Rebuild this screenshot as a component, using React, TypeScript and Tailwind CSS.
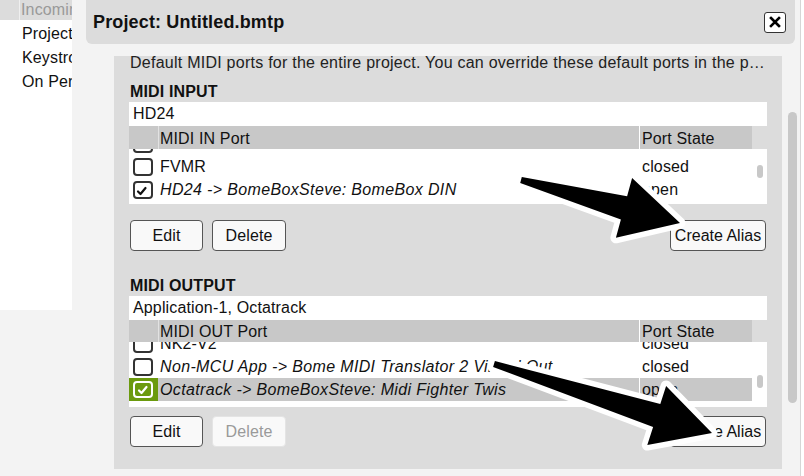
import React from 'react';

type Row = {
  name: string;
  state: string;
  checked?: boolean;
  italic?: boolean;
  selected?: boolean;
};

const inputRows: Row[] = [
  { name: 'BomeBox', state: 'closed' },
  { name: 'FVMR', state: 'closed' },
  { name: 'HD24 -> BomeBoxSteve: BomeBox DIN', state: 'open', checked: true, italic: true },
  { name: 'Launchpad', state: 'closed' },
];

const outputRows: Row[] = [
  { name: 'NK2-V2', state: 'closed' },
  { name: 'Non-MCU App -> Bome MIDI Translator 2 Virtual Out', state: 'closed', italic: true },
  {
    name: 'Octatrack -> BomeBoxSteve: Midi Fighter Twis',
    state: 'open',
    checked: true,
    italic: true,
    selected: true,
  },
];

const Tick = ({ color }: { color: string }) => (
  <svg width="12" height="10" viewBox="0 0 12 10">
    <path d="M2 5.5 L4.5 8 L9.5 2" fill="none" stroke={color} strokeWidth="2.2" strokeLinecap="round" strokeLinejoin="round" />
  </svg>
);

const CheckBox = ({ checked, onGreen }: { checked?: boolean; onGreen?: boolean }) => {
  if (onGreen) {
    return (
      <div className="flex h-[17px] w-[20px] items-end justify-center rounded-[4px] border-2 border-white pb-[1px]">
        <Tick color="#ffffff" />
      </div>
    );
  }
  return (
    <div className="flex h-[18px] w-[20px] items-end justify-start rounded-[4px] border-2 border-[#333] bg-white pb-[1px] pl-[1px]">
      {checked && <Tick color="#111111" />}
    </div>
  );
};

const TableRow = ({ row }: { row: Row }) => (
  <div className="flex h-[23px] shrink-0">
    <div className={`flex w-[29px] items-center pl-[4px] ${row.selected ? 'bg-[#6b9a0e]' : ''}`}>
      <CheckBox checked={row.checked} onGreen={row.selected} />
    </div>
    <div
      className={`w-[481px] overflow-hidden whitespace-nowrap pl-[2px] leading-[23px] ${
        row.italic ? 'italic tracking-[0.35px]' : ''
      } ${row.selected ? 'bg-[#c8c8c8]' : ''}`}
    >
      {row.name}
    </div>
    <div className={`w-[113px] border-l border-white pl-[2px] leading-[23px] ${row.selected ? 'bg-[#c8c8c8]' : ''}`}>
      {row.state}
    </div>
  </div>
);

const PortTable = ({
  title,
  value,
  column,
  rows,
  bodyHeight,
  headerHeight,
  headerPad,
  offset,
  thumbTop,
}: {
  title: string;
  value: string;
  column: string;
  rows: Row[];
  bodyHeight: string;
  headerHeight: string;
  headerPad: string;
  offset: string;
  thumbTop: string;
}) => (
  <>
    <div className="h-[20px] pl-[1px] text-[16px] font-bold leading-[20px]">{title}</div>
    <div className="h-[24px] bg-white pl-[4px] leading-[24px]">{value}</div>
    <div className={`flex bg-[#c8c8c8] ${headerHeight}`}>
      <div className="w-[29px]" />
      <div className={`w-[481px] border-l border-[#e2e2e2] pl-[1px] leading-[20px] ${headerPad}`}>{column}</div>
      <div className={`w-[113px] border-l border-white pl-[2px] leading-[20px] ${headerPad}`}>Port State</div>
      <div className="w-[15px] bg-[#dcdcdc]" />
    </div>
    <div className={`flex overflow-hidden bg-white ${bodyHeight}`}>
      <div className="flex w-[623px] flex-col overflow-hidden">
        <div className={`flex flex-col ${offset}`}>
          {rows.map((r) => (
            <TableRow key={r.name} row={r} />
          ))}
        </div>
      </div>
      <div className="w-[15px] pl-[5px]">
        <div className={`h-[13px] w-[6px] rounded-full bg-[#c8c8c8] ${thumbTop}`} />
      </div>
    </div>
  </>
);

const Buttons = ({ deleteDisabled }: { deleteDisabled?: boolean }) => (
  <div className="flex h-[31px] pl-[1px] pr-[1px]">
    <button className="h-[31px] w-[73px] rounded-[4px] border border-[#555] bg-[#f9f9f9]">Edit</button>
    <button
      className={`ml-[9px] h-[31px] w-[74px] rounded-[4px] border bg-[#f9f9f9] ${
        deleteDisabled ? 'border-[#e4e4e4] text-[#9a9a9a]' : 'border-[#555]'
      }`}
    >
      Delete
    </button>
    <button className="ml-auto h-[31px] w-[96px] rounded-[4px] border border-[#555] bg-[#f9f9f9] tracking-normal">
      Create Alias
    </button>
  </div>
);

function arrowPoints(tx: number, ty: number, hx: number, hy: number) {
  const dx = hx - tx;
  const dy = hy - ty;
  const len = Math.hypot(dx, dy);
  const ux = dx / len;
  const uy = dy / len;
  const nx = -uy;
  const ny = ux;
  const headLen = 58;
  const headHalf = 31;
  const shaftHalf = 12;
  const tailHalf = 3;
  const bx = hx - ux * headLen;
  const by = hy - uy * headLen;
  const pts = [
    [tx - nx * tailHalf, ty - ny * tailHalf],
    [bx - nx * shaftHalf, by - ny * shaftHalf],
    [bx - nx * headHalf, by - ny * headHalf],
    [hx, hy],
    [bx + nx * headHalf, by + ny * headHalf],
    [bx + nx * shaftHalf, by + ny * shaftHalf],
    [tx + nx * tailHalf, ty + ny * tailHalf],
  ];
  return pts.map((p) => `${p[0].toFixed(1)},${p[1].toFixed(1)}`).join(' ');
}

const Arrows = () => (
  <svg className="pointer-events-none absolute left-0 top-0" width="804" height="476" viewBox="0 0 804 476">
    {[
      [521, 180, 680, 223],
      [494, 364, 712, 433],
    ].map(([a, b, c, d]) => (
      <polygon
        key={a}
        points={arrowPoints(a, b, c, d)}
        fill="#000"
        stroke="#fff"
        strokeWidth="11"
        strokeLinejoin="round"
        paintOrder="stroke"
      />
    ))}
  </svg>
);

export default function App() {
  return (
    <div className="relative flex h-[476px] w-[804px] overflow-hidden bg-white font-['Liberation_Sans',Arial,sans-serif] text-[16px] tracking-[0.15px] text-[#111]">
      <aside className="flex w-[72px] shrink-0 flex-col">
        <div className="h-[310px] bg-white">
          <div className="flex h-[20px] bg-[#dcdcdc]">
            <div className="w-[20px] shrink-0 border-r border-[#efefef]" />
            <div className="overflow-hidden whitespace-nowrap pl-[1px] leading-[20px] text-[#999]">Incoming</div>
          </div>
          <div className="mt-[2px] flex flex-col">
            {['Project Default Ports', 'Keystrokes', 'On Performer'].map((t) => (
              <div key={t} className="h-[24px] overflow-hidden whitespace-nowrap pl-[22px] leading-[24px]">
                {t}
              </div>
            ))}
          </div>
        </div>
        <div className="flex-1 bg-[#f3f3f3]" />
      </aside>

      <div className="flex w-[728px] shrink-0 flex-col bg-[#f3f3f3]">
        <div className="ml-[14px] mr-[5px] flex h-[44px] shrink-0 items-center justify-between rounded-b-[6px] bg-[#dcdcdc] pl-[7px] pr-[9px]">
          <span className="text-[18px] font-bold">Project: Untitled.bmtp</span>
          <button className="flex h-[21px] w-[22px] items-center justify-center rounded-[3px] border-[1.5px] border-[#333] bg-white">
            <svg width="12" height="12" viewBox="0 0 12 12">
              <path d="M2 2 L10 10 M10 2 L2 10" stroke="#000" strokeWidth="2.6" strokeLinecap="square" />
            </svg>
          </button>
        </div>

        <div className="mt-[12px] flex flex-1 pl-[42px]">
          <section className="flex h-[413px] w-[668px] flex-col bg-[#dcdcdc] px-[15px]">
            <p className="-mt-[2px] h-[18px] truncate pl-[1px] leading-[18px] tracking-[0.25px] text-[#222]">
              Default MIDI ports for the entire project. You can override these default ports in the preset properties.
            </p>
            <div className="mt-[10px]" />
            <PortTable
              title="MIDI INPUT"
              value="HD24"
              column="MIDI IN Port"
              rows={inputRows}
              headerHeight="h-[23px]"
              headerPad="pt-[3px]"
              bodyHeight="h-[55px]"
              offset="-mt-[17px]"
              thumbTop="mt-[16px]"
            />
            <div className="mt-[16px]" />
            <Buttons />
            <div className="mt-[25px]" />
            <PortTable
              title="MIDI OUTPUT"
              value="Application-1, Octatrack"
              column="MIDI OUT Port"
              rows={outputRows}
              headerHeight="h-[22px]"
              headerPad="pt-[2px]"
              bodyHeight="h-[65px]"
              offset="-mt-[10px]"
              thumbTop="mt-[33px]"
            />
            <div className="mt-[9px]" />
            <Buttons deleteDisabled />
          </section>
          <div className="ml-[6px] mt-[56px] h-[291px] w-[9px] rounded-full bg-[#c8c8c8]" />
        </div>
      </div>
      <div className="w-px shrink-0 bg-[#d6d6d6]" />
      <div className="flex-1 bg-white" />

      <Arrows />
    </div>
  );
}
